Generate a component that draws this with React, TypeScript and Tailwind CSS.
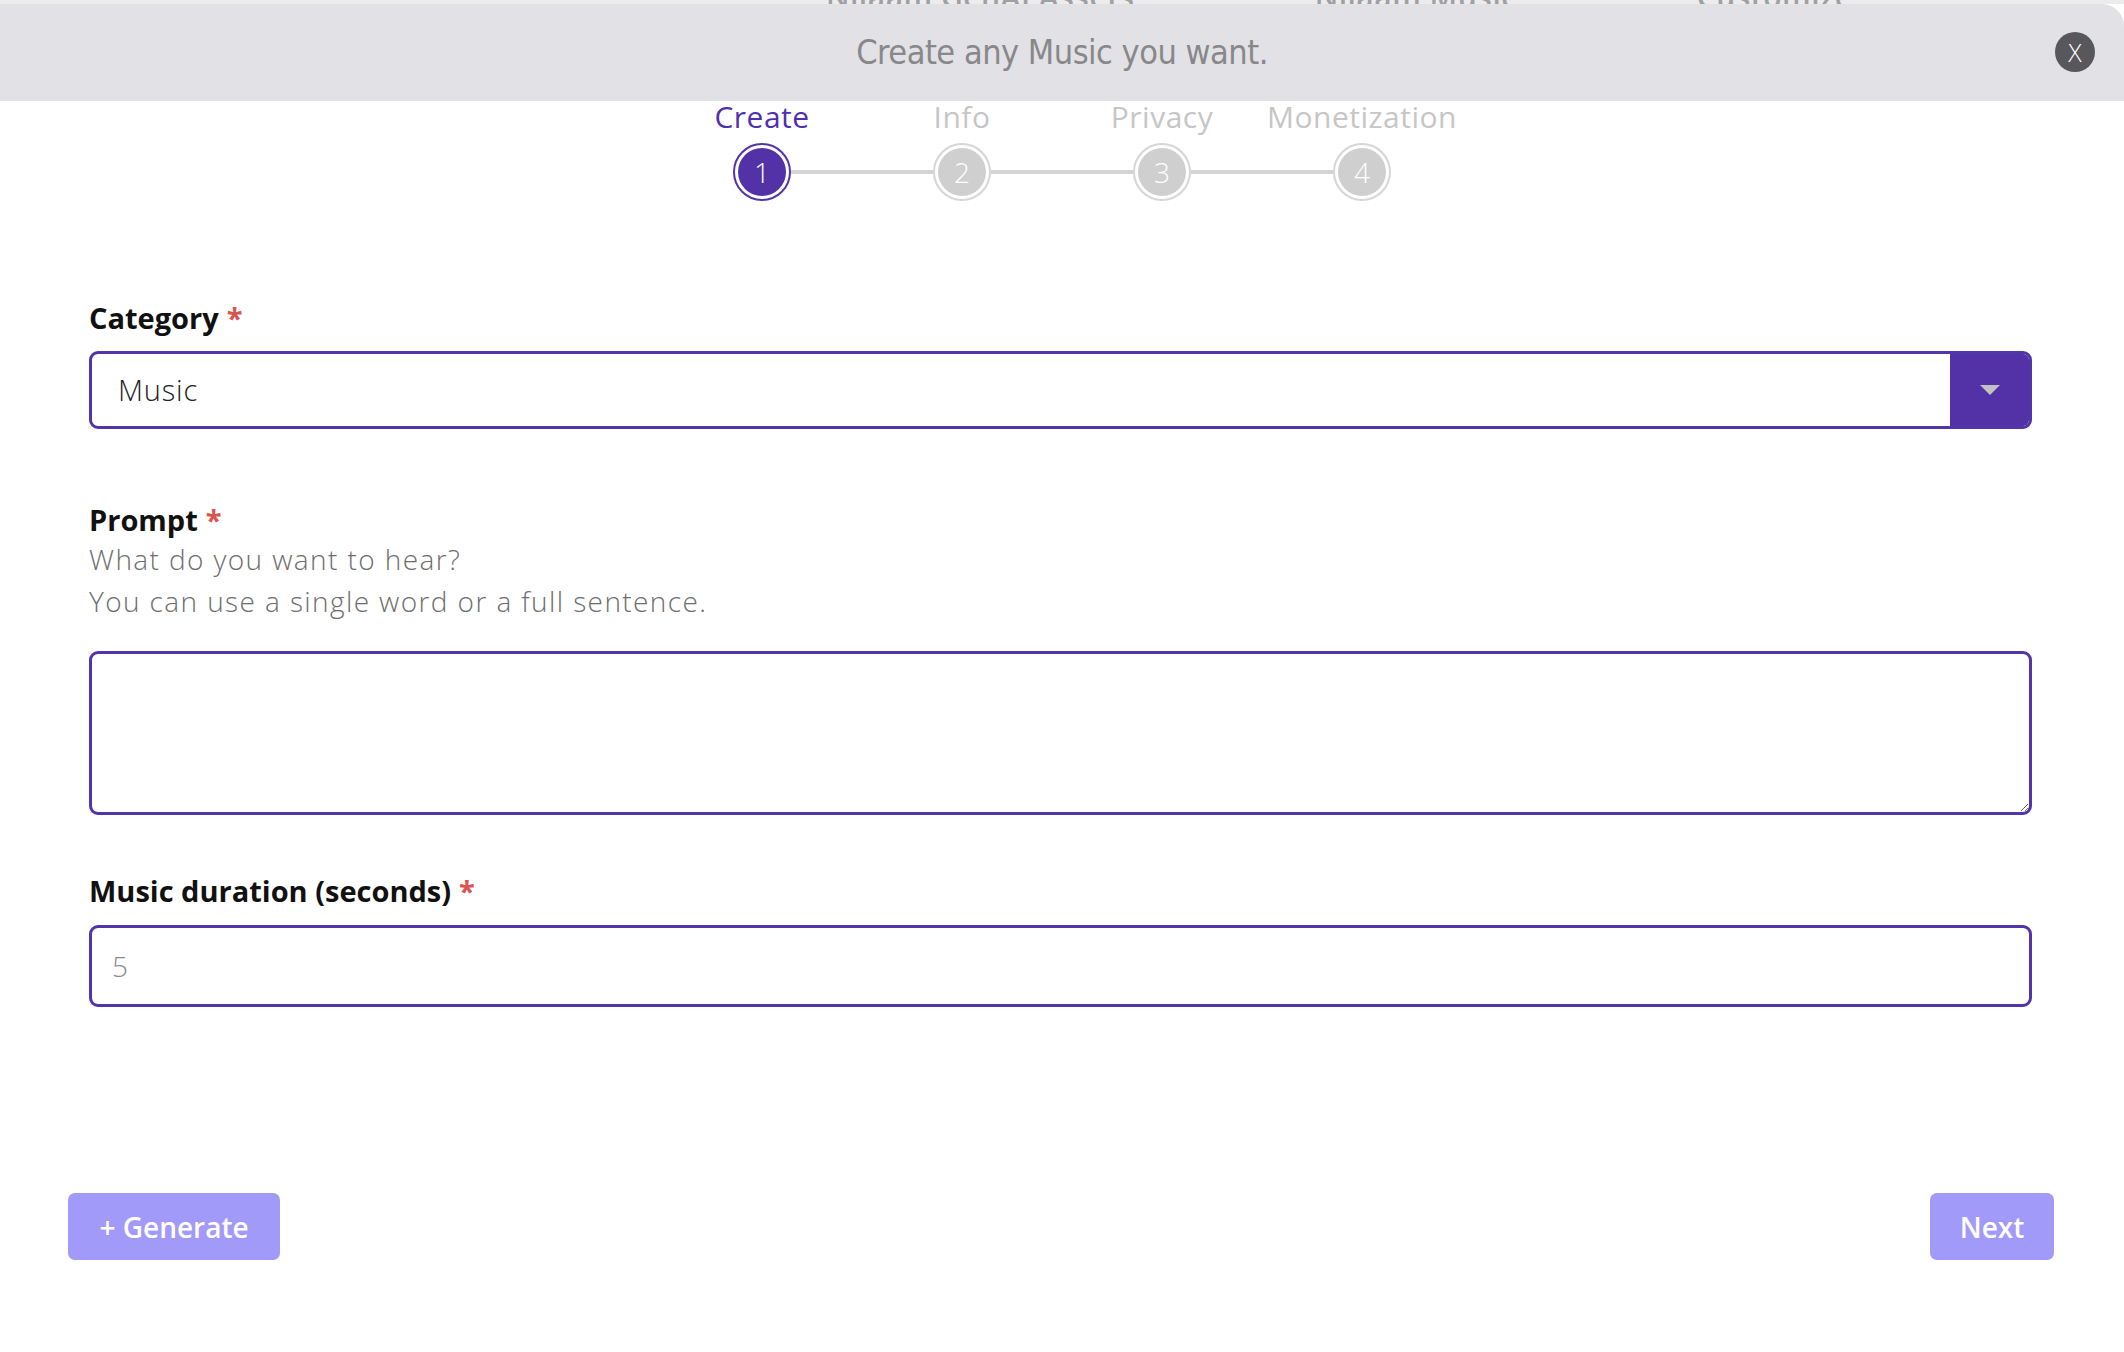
import { useState } from "react";

const font = { fontFamily: '"Open Sans", "Noto Sans", sans-serif' };

const steps = ["Create", "Info", "Privacy", "Monetization"];

function Star() {
  return <span className="ml-[8px] text-[#d9534f]">*</span>;
}

export default function App() {
  const [active] = useState(0);
  const [prompt, setPrompt] = useState("");

  return (
    <div className="relative h-[1352px] w-full overflow-hidden bg-white" style={font}>
      {/* page behind the modal, only a sliver shows */}
      <div className="flex h-[4px] items-end overflow-hidden bg-[#ececec]">
        <div className="ml-[826px] flex gap-[180px] text-[30px] font-semibold leading-[14px] tracking-[0.5px] text-[#a0a0a0]">
          <span>Nilaam GenAI Assets</span>
          <span>Nilaam Music</span>
          <span>Customize</span>
        </div>
      </div>

      {/* header */}
      <div className="relative flex h-[97px] items-center justify-center rounded-tr-[22px] bg-[#e2e1e6]">
        <h1
          className="text-[34px] tracking-[-0.5px] text-[#88888b]"
          style={{ fontFamily: '"Liberation Sans Narrow", "DejaVu Sans Condensed", "Roboto", sans-serif' }}
        >
          Create any Music you want.
        </h1>
        <button className="absolute right-[29px] top-[28px] flex h-[40px] w-[40px] items-center justify-center rounded-full bg-[#58585c] text-[25px] font-light leading-none text-white">
          X
        </button>
      </div>

      {/* stepper */}
      <div className="mx-auto w-[800px]">
        <div className="grid grid-cols-4">
          {steps.map((s, i) => (
            <div
              key={s}
              className={`text-center text-[30px] leading-[32px] tracking-[0.5px] ${i === active ? "text-[#4f2fb0]" : "text-[#c6c6c6]"}`}
            >
              {s}
            </div>
          ))}
        </div>
        <div className="mt-[10px] flex items-center pl-[71px]">
          {steps.map((s, i) => (
            <div key={s} className="flex items-center">
              {i > 0 && <div className="h-[4px] w-[142px] bg-[#d4d4d4]" />}
              <div
                className={`h-[58px] w-[58px] rounded-full border-2 bg-white p-[3px] ${i === active ? "border-[#5235a8]" : "border-[#d6d6d6]"}`}
              >
                <div
                  className={`flex h-full w-full items-center justify-center rounded-full text-[28px] font-light text-white ${i === active ? "bg-[#5232a6]" : "bg-[#cfcfcf]"}`}
                >
                  {i + 1}
                </div>
              </div>
            </div>
          ))}
        </div>
      </div>

      {/* form */}
      <div className="pl-[89px] pr-[92px]">
        <div className="mt-[99px] text-[29px] font-bold leading-[36px] text-[#111]">
          Category
          <Star />
        </div>
        <div className="mt-[15px] flex h-[78px] overflow-hidden rounded-[9px] border-[3px] border-[#5235a8]">
          <div className="flex flex-1 items-center pl-[26px] text-[29px] font-light tracking-[0.8px] text-[#222]">Music</div>
          <div className="flex w-[79px] items-center justify-center bg-[#5232a6]">
            <svg width="20" height="10" viewBox="0 0 20 10">
              <path d="M0 0 L20 0 L10 10 Z" fill="#c2c2c2" />
            </svg>
          </div>
        </div>

        <div className="mt-[73px] text-[29px] font-bold leading-[36px] text-[#111]">
          Prompt
          <Star />
        </div>
        <div className="text-[28px] font-light leading-[42px] tracking-[1.4px] text-[#6e6e6e]">
          <div>What do you want to hear?</div>
          <div>You can use a single word or a full sentence.</div>
        </div>
        <textarea
          value={prompt}
          onChange={(e) => setPrompt(e.target.value)}
          className="mt-[29px] block h-[164px] w-full rounded-[9px] border-[3px] border-[#5235a8] px-[22px] py-[16px] text-[28px] outline-none"
        />

        <div className="mt-[58px] text-[29px] font-bold leading-[36px] text-[#111]">
          Music duration (seconds)
          <Star />
        </div>
        <input
          type="text"
          placeholder="5"
          className="mt-[16px] block h-[82px] w-full rounded-[9px] border-[3px] border-[#5235a8] px-[20px] text-[28px] font-light outline-none placeholder:text-[#8a8a8a]"
        />
      </div>

      {/* footer buttons */}
      <div className="mt-[186px] flex items-center justify-between pl-[68px] pr-[70px]">
        <button className="h-[67px] w-[212px] rounded-[7px] bg-[#a29af8] text-[28px] font-semibold text-white">
          + Generate
        </button>
        <button className="h-[67px] w-[124px] rounded-[7px] bg-[#a29af8] text-[28px] font-semibold text-white">
          Next
        </button>
      </div>
    </div>
  );
}
